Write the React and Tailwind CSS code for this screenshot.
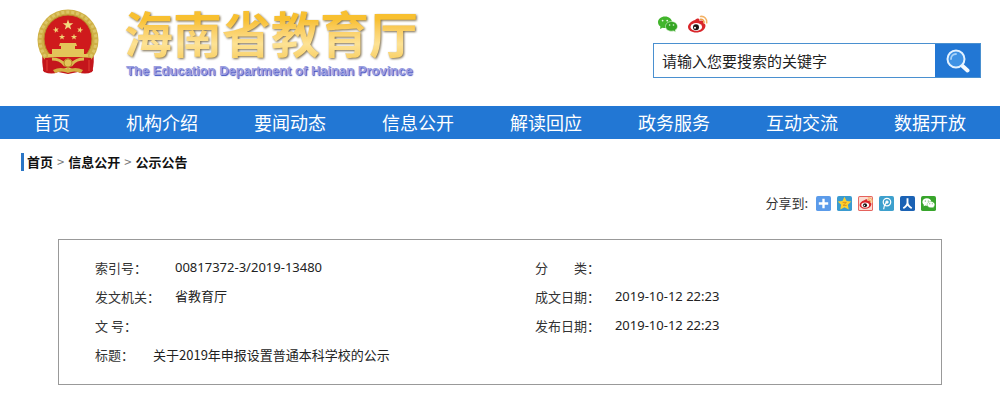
import React, { useState } from "react";

const navItems = [
  "首页",
  "机构介绍",
  "要闻动态",
  "信息公开",
  "解读回应",
  "政务服务",
  "互动交流",
  "数据开放",
];

const details = [
  { label: "索引号：", value: "00817372-3/2019-13480" },
  { label: "分　　类：", value: "" },
  { label: "发文机关：", value: "省教育厅" },
  { label: "成文日期：", value: "2019-10-12 22:23" },
  { label: "文 号：", value: "" },
  { label: "发布日期：", value: "2019-10-12 22:23" },
];

const star = "M0 -5 L1.2 -1.6 L4.8 -1.5 L1.9 0.6 L2.9 4 L0 2 L-2.9 4 L-1.9 0.6 L-4.8 -1.5 L-1.2 -1.6Z";

const Emblem = () => (
  <svg viewBox="0 0 64 66" className="w-16 shrink-0" role="img" aria-label="国徽">
    <path d="M7 42 Q5 54 8 63 Q16 66 22 63 L32 65 L42 63 Q49 66 56 63 Q59 54 57 42Z" fill="#c4161c" />
    <circle cx="32" cy="31" r="30.5" fill="#cfb045" />
    <circle cx="32" cy="31" r="28" fill="none" stroke="#dcc566" strokeWidth="3" strokeDasharray="3 2" />
    <circle cx="32" cy="30" r="24" fill="#cf1a1c" stroke="#b8912c" strokeWidth="1" />
    <path d={star} transform="translate(32 16) scale(1.1)" fill="#f3dc80" />
    <path d={star} transform="translate(20 21) scale(.65) rotate(-15)" fill="#f0d474" />
    <path d={star} transform="translate(44 21) scale(.65) rotate(15)" fill="#f0d474" />
    <path d={star} transform="translate(26 28) scale(.65)" fill="#f0d474" />
    <path d={star} transform="translate(38 28) scale(.65)" fill="#f0d474" />
    <path d="M24 34h16l1 3h-2v3h9v5H16v-5h9v-3h-2z" fill="#e3c559" />
    <path d="M12 45h40v3H12z" fill="#e3c559" />
    <path d="M9 49 Q20 47 32 52 Q44 47 55 49 L57 62 Q48 66 41 62 L32 58 L23 62 Q16 66 7 62Z" fill="#c4161c" />
    <path d="M16 50 Q24 50 28 55 Q32 47 36 55 Q40 50 48 50" fill="none" stroke="#dcbb50" strokeWidth="3" />
    <circle cx="32" cy="54" r="4" fill="#e3c559" stroke="#b98d28" strokeWidth="1" />
    <path d="M17 61 Q25 57 32 61 Q39 57 47 61 L45 64 Q38 61 32 64 Q26 61 19 64Z" fill="#d3ae43" />
    <path d="M11 51v11M53 51v11" stroke="#d8322c" strokeWidth="1.5" />
  </svg>
);

const WechatShape = ({ front, back, eye }) => (
  <g>
    <path d="M8 1.5C4 1.5 1 4 1 7.2c0 1.8 1 3.3 2.4 4.4L3 14l2.6-1.3c.8.2 1.6.3 2.4.3 4 0 7-2.6 7-5.8S12 1.5 8 1.5Z" fill={back} />
    <path d="M14.5 6.5c-3.3 0-6 2.2-6 4.9s2.7 4.8 6 4.8c.7 0 1.3-.1 1.9-.3l2.3 1.2-.5-2c1.4-.9 2.3-2.2 2.3-3.7 0-2.7-2.7-4.9-6-4.9Z" fill={front} stroke={eye} strokeWidth=".6" />
    <g fill={eye}>
      <circle cx="5.6" cy="5.6" r=".9" />
      <circle cx="10.2" cy="5.6" r=".9" />
      <circle cx="12.6" cy="10" r=".8" />
      <circle cx="16.5" cy="10" r=".8" />
    </g>
  </g>
);

const WeiboShape = () => (
  <g>
    <path d="M8 5C11 2.5 13 3.5 12.5 6c3-1 4.5 0 3.8 2 2 .6 2.5 2.3 2 4-1 3.3-4.6 5.5-9 5.5C4.5 17.500 1 15 1 12c0-2.500 3-6 7-7Z" fill="#d9252a" />
    <ellipse cx="9.3" cy="12" rx="5.8" ry="3.9" fill="#fff" />
    <circle cx="9" cy="12.2" r="3" fill="#1c1414" />
    <circle cx="8" cy="12.7" r="1" fill="#fff" />
    <path d="M13.5 4.3c2-.3 3.800 1.200 3.500 3.400" fill="none" stroke="#f0a04a" strokeWidth="1.5" strokeLinecap="round" />
    <path d="M13.5 1.5c3.800-.6 6.800 2.400 6.200 6.300" fill="none" stroke="#f3b266" strokeWidth="1.6" strokeLinecap="round" />
  </g>
);

const SearchGlass = () => (
  <svg viewBox="0 0 24 24" className="w-6" aria-hidden="true">
    <path d="M16 16.5l5.5 5" stroke="#f6fbff" strokeWidth="4" strokeLinecap="round" />
    <circle cx="10" cy="10" r="8.5" fill="#3f92e4" stroke="#e4f2ff" strokeWidth="2" />
    <path d="M5 10a5 5 0 0 1 5-5" fill="none" stroke="#a9d2f8" strokeWidth="1.8" strokeLinecap="round" />
  </svg>
);

const shareIcons = [
  {
    name: "更多",
    color: "#5b9bea",
    shape: <path d="M8 3v10M3 8h10" stroke="#fff" strokeWidth="2.5" />,
  },
  {
    name: "QQ空间",
    color: "#3a9bd0",
    shape: (
      <g>
        <path d="M8 .8l2.200 4.400 5 .6-3.600 3.500.9 5L8 12l-4.500 2.300.9-5L.8 5.800l5-.6Z" fill="#fcd02e" />
        <path d="M6 6.800h4L6.500 10h3.800" fill="none" stroke="#dc8f18" />
      </g>
    ),
  },
  {
    name: "新浪微博",
    color: "#e5625c",
    shape: (
      <g>
        <rect x="1" y="1" width="14" height="14" rx="1" fill="#fbdcd2" />
        <g transform="translate(1 1) scale(.72)">
          <WeiboShape />
        </g>
      </g>
    ),
  },
  {
    name: "腾讯微博",
    color: "#3da0cd",
    shape: (
      <g fill="none" stroke="#fff">
        <circle cx="8.5" cy="6.5" r="4" strokeWidth="1.3" />
        <circle cx="8.5" cy="6.5" r="1.3" fill="#fff" />
        <path d="M7.5 7.5C5.5 9.5 5 11.5 5 14" strokeWidth="1.3" />
      </g>
    ),
  },
  {
    name: "人人网",
    color: "#1b62b4",
    shape: <path d="M8 2.5v4.5c0 2.5-2 4.5-4.5 6M8 7c0 2.5 2 4.5 4.5 6" fill="none" stroke="#fff" strokeWidth="2" />,
  },
  {
    name: "微信",
    color: "#38a52c",
    shape: (
      <g transform="translate(.8 1.5) scale(.68)">
        <WechatShape back="#fff" front="#fff" eye="#38a52c" />
      </g>
    ),
  },
];

const App = () => {
  const [keyword, setKeyword] = useState("");

  const handleSubmit = (e) => {
    e.preventDefault();
  };

  return (
    <div className="min-h-screen bg-white font-['Noto_Sans_CJK_SC',sans-serif] text-[13px] leading-5 text-[#333]">
      <header className="flex h-[106px] items-start justify-between pr-[19px] pl-9">
        <a href="#" className="flex items-start pt-[9px]">
          <Emblem />
          <div className="pl-6">
            <h1 className="bg-linear-to-b from-[#f8c030] from-20% via-[#fde294] via-65% to-[#f8cc58] bg-clip-text font-['Liberation_Sans','Noto_Sans_CJK_SC',sans-serif] text-[49px] leading-[54px] font-bold text-transparent drop-shadow-[1px_1px_1px_rgba(90,70,30,0.8)]">
              海南省教育厅
            </h1>
            <p className="pl-[2px] font-['Liberation_Sans',sans-serif] text-[13px] leading-4 font-bold text-[#9a9ee0] [text-shadow:1px_1px_1px_#3c4cc0]">
              The Education Department of Hainan Province
            </p>
          </div>
        </a>

        <div className="w-[328px] pt-[15px]">
          <div className="flex gap-2 pl-1">
            <a href="#" aria-label="微信">
              <svg viewBox="0 0 22 20" className="h-5 w-[22px]">
                <WechatShape back="#42b52c" front="#35a524" eye="#e8f8e2" />
              </svg>
            </a>
            <a href="#" aria-label="微博">
              <svg viewBox="0 0 22 20" className="h-5 w-[22px]">
                <WeiboShape />
              </svg>
            </a>
          </div>
          <form onSubmit={handleSubmit} className="mt-2 flex h-[35px] border border-[#4a90d0]">
            <input
              type="text"
              aria-label="搜索"
              placeholder="请输入您要搜索的关键字"
              value={keyword}
              onChange={(e) => setKeyword(e.target.value)}
              className="min-w-0 flex-1 px-2 text-[15px] text-[#222] outline-none placeholder:text-[#222]"
            />
            <button type="submit" aria-label="提交" className="flex w-[45px] items-center justify-center bg-[#2277d4]">
              <SearchGlass />
            </button>
          </form>
        </div>
      </header>

      <nav className="flex h-[33px] items-center justify-between bg-[#2277d4] px-[34px] pb-[2px] text-lg text-white">
        {navItems.map((item) => (
          <a href="#" key={item}>
            {item}
          </a>
        ))}
      </nav>

      <div className="px-[21px] pt-[14px]">
        <div className="flex h-[18px] items-center gap-1 border-l-3 border-[#2b76c6] pl-[3px]">
          <a href="#" className="font-bold text-[#111]">首页</a>
          <span className="text-[#777]">&gt;</span>
          <a href="#" className="font-bold text-[#111]">信息公开</a>
          <span className="text-[#777]">&gt;</span>
          <a href="#" className="font-bold text-[#111]">公示公告</a>
        </div>
      </div>

      <div className="flex items-center justify-end gap-[6px] pt-[22px] pr-16">
        <span className="pr-[2px]">分享到:</span>
        {shareIcons.map((icon) => (
          <a href="#" key={icon.name} aria-label={icon.name}>
            <svg viewBox="0 0 16 16" className="size-[15px]">
              <rect width="16" height="16" rx="2" fill={icon.color} />
              {icon.shape}
            </svg>
          </a>
        ))}
      </div>

      <main className="mx-[58px] mt-[26px] border border-[#999] pt-[13px] pb-[15px] pl-9">
        <dl className="grid grid-cols-[13fr_12fr] leading-[29px]">
          {details.map((row) => (
            <div key={row.label} className="flex">
              <dt className="w-20">{row.label}</dt>
              <dd className="font-['Noto_Sans','Noto_Sans_CJK_SC',sans-serif] text-[#222]">{row.value}</dd>
            </div>
          ))}
          <div className="col-span-2 flex">
            <dt className="w-[58px]">标题：</dt>
            <dd className="text-[#222]">关于2019年申报设置普通本科学校的公示</dd>
          </div>
        </dl>
      </main>
    </div>
  );
};

export default App;
